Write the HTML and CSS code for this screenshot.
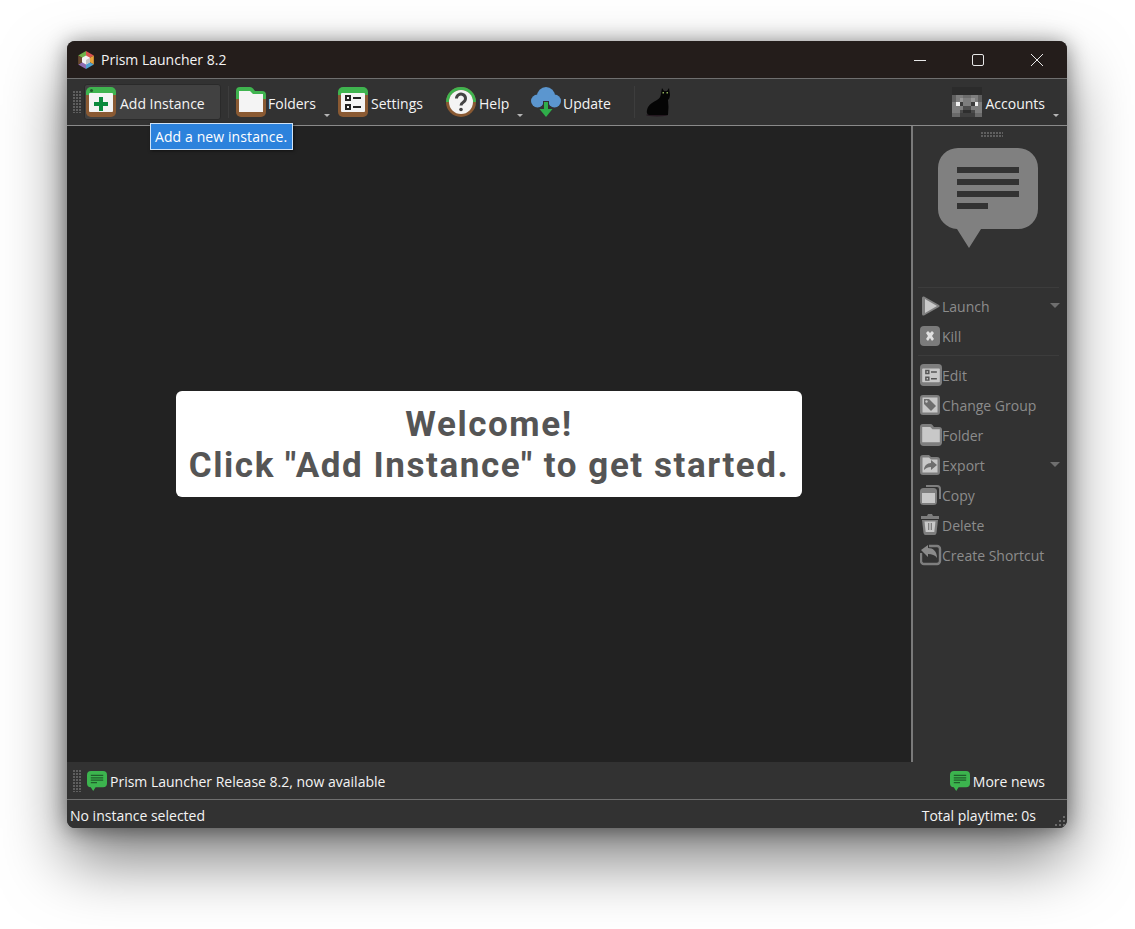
FILE: index.html
```html
<!DOCTYPE html>
<html lang="en">
<head>
  <meta charset="UTF-8">
  <title>Prism Launcher 8.2</title>
  <link rel="stylesheet" href="styles.css">
</head>
<body>

  <!-- shared icons -->
  <svg class="sprite" xmlns="http://www.w3.org/2000/svg">
    <symbol id="i-add" viewBox="0 0 30 30">
      <path class="i-frame" d="M0 6h30v19a5 5 0 0 1-5 5H5a5 5 0 0 1-5-5z"/>
      <path class="i-top" d="M5 0h20a5 5 0 0 1 5 5v3H0V5a5 5 0 0 1 5-5z"/>
      <rect class="i-paper" x="3" y="6" width="24" height="19" rx="1"/>
      <circle class="i-dot" cx="5.500" cy="3.500" r="1.500"/>
      <path class="i-plus" d="M13 10h4v5h5v4h-5v5h-4v-5H8v-4h5z"/>
    </symbol>
    <symbol id="i-folder" viewBox="0 0 30 30">
      <path class="i-frame" d="M0 8h30v17a5 5 0 0 1-5 5H5a5 5 0 0 1-5-5z"/>
      <path class="i-top" d="M4 0h10q2 0 3 1.500L19 4h7a4 4 0 0 1 4 4v4H0V4a4 4 0 0 1 4-4z"/>
      <path class="i-paper" d="M3 4h11l3 3h10v18H3z"/>
    </symbol>
    <symbol id="i-settings" viewBox="0 0 30 30">
      <path class="i-frame" d="M0 6h30v19a5 5 0 0 1-5 5H5a5 5 0 0 1-5-5z"/>
      <path class="i-top" d="M5 0h20a5 5 0 0 1 5 5v3H0V5a5 5 0 0 1 5-5z"/>
      <rect class="i-paper" x="3" y="6" width="24" height="19" rx="1"/>
      <path class="i-ink" d="M7 8h6v6H7zm2 2v2h2v-2zM7 17h6v6H7zm2 2v2h2v-2zM15 10h8v2h-8zM15 19h8v2h-8z" fill-rule="evenodd"/>
    </symbol>
    <symbol id="i-news" viewBox="0 0 100 100">
      <path class="i-bubble" d="M20 0h60a20 20 0 0 1 20 20v41a20 20 0 0 1-20 20H43L31 100 19 81a20 20 0 0 1-19-20V20A20 20 0 0 1 20 0z"/>
      <path class="i-lines" d="M19 19h62v6H19zM19 31h62v6H19zM19 43h62v6H19zM19 55h31v6H19z"/>
    </symbol>
  </svg>

  <div class="window">

    <header class="titlebar">
      <svg class="app-icon" viewBox="0 0 18 18">
        <path fill="#6fb24a" d="M9 0v9L1.200 4.500z"/>
        <path fill="#d9534f" d="M9 0l7.800 4.500L9 9z"/>
        <path fill="#e8a33c" d="M16.800 4.500v9L9 9z"/>
        <path fill="#4fa3d1" d="M16.800 13.500L9 18V9z"/>
        <path fill="#8e6bb0" d="M9 18l-7.800-4.500L9 9z"/>
        <path fill="#6b4a2f" d="M1.200 13.500v-9L9 9z"/>
        <path fill="#f4f4f4" d="M9 4.500l4 2.200v4.600l-4 2.200-4-2.200V6.700z"/>
        <path fill="#c4c4c4" d="M9 9l4-2.300v4.600l-4 2.200z"/>
      </svg>
      <span class="app-title">Prism Launcher 8.2</span>
      <div class="win-controls">
        <button class="win-btn">
          <svg viewBox="0 0 12 12"><path d="M0 6.500h12"/></svg>
        </button>
        <button class="win-btn">
          <svg viewBox="0 0 12 12"><rect x="0.500" y="0.500" width="11" height="11" rx="1.500"/></svg>
        </button>
        <button class="win-btn">
          <svg viewBox="0 0 12 12"><path d="M0 0l12 12M12 0L0 12"/></svg>
        </button>
      </div>
    </header>

    <nav class="toolbar">
      <span class="grip"></span>
      <a class="tool tool-active">
        <svg class="tool-icon"><use href="#i-add"/></svg>
        <span>Add Instance</span>
      </a>
      <span class="tool-sep"></span>
      <a class="tool tool-folders">
        <svg class="tool-icon"><use href="#i-folder"/></svg>
        <span>Folders</span>
        <i class="menu-arrow"></i>
      </a>
      <a class="tool tool-settings">
        <svg class="tool-icon"><use href="#i-settings"/></svg>
        <span>Settings</span>
      </a>
      <a class="tool tool-help">
        <svg class="tool-icon" viewBox="0 0 30 30">
          <circle cx="15" cy="15" r="15" fill="#8a5a33"/>
          <path fill="#3fb44f" d="M0 15a15 15 0 0 1 30 0h-3a12 12 0 0 0-24 0z"/>
          <circle cx="15" cy="15" r="12" fill="#f4f4f4"/>
          <path class="help-mark" d="M10.500 11.500a4.500 4.300 0 1 1 7 3.500c-1.500 1-2.500 1.700-2.500 3.500"/>
          <circle cx="15" cy="22.500" r="1.800" fill="#444"/>
        </svg>
        <span>Help</span>
        <i class="menu-arrow"></i>
      </a>
      <a class="tool tool-update">
        <svg class="tool-icon" viewBox="0 0 30 30">
          <circle cx="6.500" cy="14" r="6.500" fill="#5b96cf"/>
          <circle cx="15" cy="9" r="9" fill="#5b96cf"/>
          <circle cx="23.500" cy="14" r="6.500" fill="#5b96cf"/>
          <path class="update-arrow" d="M13 15h4v7h4.500L15 30l-6.500-8H13z"/>
        </svg>
        <span>Update</span>
      </a>
      <span class="tool-sep tool-sep-cat"></span>
      <svg class="cat" viewBox="0 0 28 30">
        <ellipse cx="13" cy="28" rx="11" ry="1.500" fill="#241820"/>
        <path fill="#050505" d="M18 1l2 3h3l2-3 1 7q0 3-2 5 1 7 0 15H5q-3-1-2-5c1-6 7-8 10-10q4-2 4-7z"/>
        <path fill="#8fae5a" d="M18.500 5h1.500v1.500h-1.500zM22.500 5H24v1.500h-1.500z"/>
      </svg>
      <a class="tool tool-accounts">
        <svg class="avatar" viewBox="0 0 8 8" shape-rendering="crispEdges">
          <rect width="8" height="8" fill="#2b2b2b"/>
          <rect y="2" width="8" height="6" fill="#7d7d7d"/>
          <rect x="0" y="2" width="1" height="2" fill="#5f5f5f"/>
          <rect x="7" y="2" width="1" height="2" fill="#5f5f5f"/>
          <rect x="3" y="2" width="2" height="1" fill="#6c6c6c"/>
          <rect x="2" y="3" width="1" height="1" fill="#969696"/>
          <rect x="5" y="3" width="1" height="1" fill="#969696"/>
          <rect x="1" y="4" width="1" height="1" fill="#f2f2f2"/>
          <rect x="2" y="4" width="1" height="1" fill="#3c3c3c"/>
          <rect x="5" y="4" width="1" height="1" fill="#3c3c3c"/>
          <rect x="6" y="4" width="1" height="1" fill="#f2f2f2"/>
          <rect x="3" y="5" width="2" height="1" fill="#4d4d4d"/>
          <rect x="2" y="6" width="4" height="1" fill="#4a4a4a"/>
          <rect x="3" y="6" width="2" height="1" fill="#2e2e2e"/>
          <rect x="0" y="7" width="2" height="1" fill="#6a6a6a"/>
          <rect x="2" y="7" width="4" height="1" fill="#3f3f3f"/>
          <rect x="6" y="7" width="2" height="1" fill="#6a6a6a"/>
        </svg>
        <span>Accounts</span>
        <i class="menu-arrow"></i>
      </a>
      <div class="tooltip">Add a new instance.</div>
    </nav>

    <div class="content">
      <main class="instances">
        <div class="welcome">Welcome!<br>Click "Add Instance" to get started.</div>
      </main>

      <aside class="sidebar">
        <span class="grip-h"></span>
        <svg class="news-big"><use href="#i-news"/></svg>
        <div class="side-sep side-sep-top"></div>

        <a class="side-item">
          <svg class="side-icon" viewBox="0 0 22 22">
            <path fill="#808080" d="M4 1.500l15 8.500q1.500 1 0 2L4 20.500q-2 .5-2-1.500V3q0-2 2-1.500z"/>
            <path fill="#c9c9c9" d="M5 4l12 7-12 7z"/>
          </svg>
          <span>Launch</span>
          <i class="side-arrow"></i>
        </a>
        <a class="side-item">
          <svg class="side-icon" viewBox="0 0 22 22">
            <rect y="1" width="20" height="20" rx="4" fill="#7b7b7b"/>
            <path fill="#e0e0e0" d="M6 8l2-2 2 2 2-2 2 2-2 2.900 2 3-2 2-2-2.900-2 2.900-2-2 2-3z"/>
          </svg>
          <span>Kill</span>
        </a>
        <div class="side-sep"></div>

        <a class="side-item">
          <svg class="side-icon side-icon-box"><use href="#i-settings"/></svg>
          <span>Edit</span>
        </a>
        <a class="side-item">
          <svg class="side-icon" viewBox="0 0 22 22">
            <rect y="1" width="20" height="20" rx="3" fill="#7e7e7e"/>
            <rect x="2.500" y="3.500" width="15" height="15" fill="#c8c8c8"/>
            <path fill="#6e6e6e" d="M4 5h5l7 7-5 5-7-7z"/>
            <circle cx="6.500" cy="7.500" r="1.200" fill="#c8c8c8"/>
          </svg>
          <span>Change Group</span>
        </a>
        <a class="side-item">
          <svg class="side-icon side-icon-box"><use href="#i-folder"/></svg>
          <span>Folder</span>
        </a>
        <a class="side-item">
          <svg class="side-icon" viewBox="0 0 22 22">
            <path fill="#7e7e7e" d="M3 1h6l2 2h6a3 3 0 0 1 3 3v12a3 3 0 0 1-3 3H3a3 3 0 0 1-3-3V4a3 3 0 0 1 3-3z"/>
            <path fill="#c8c8c8" d="M2.500 3.500H9l2 2h6.500v13h-15z"/>
            <path fill="#6e6e6e" d="M4 16c0-4 3-7 7-7V6l6 5-6 5v-3c-3 0-5 1-7 3z"/>
          </svg>
          <span>Export</span>
          <i class="side-arrow"></i>
        </a>
        <a class="side-item">
          <svg class="side-icon" viewBox="0 0 22 22">
            <path fill="none" stroke="#7e7e7e" stroke-width="2" d="M6 2h11a3 3 0 0 1 3 3v10"/>
            <rect y="4" width="17" height="17" rx="3.500" fill="#7e7e7e"/>
            <rect x="2" y="9" width="13" height="10" fill="#c8c8c8"/>
          </svg>
          <span>Copy</span>
        </a>
        <a class="side-item">
          <svg class="side-icon" viewBox="0 0 22 22">
            <path fill="#7e7e7e" d="M8 0h4l1 2h6v3H1V2h6z"/>
            <path fill="#7e7e7e" d="M2 6h16l-1.500 13q-.3 2-2 2h-9q-1.700 0-2-2z"/>
            <path fill="#c8c8c8" d="M4.500 7.500h11L14.300 18H5.700z"/>
            <path fill="#7e7e7e" d="M8 9h1.300v7H8zM10.700 9H12v7h-1.300z"/>
          </svg>
          <span>Delete</span>
        </a>
        <a class="side-item">
          <svg class="side-icon" viewBox="0 0 22 22">
            <path fill="none" stroke="#7e7e7e" stroke-width="2.400" d="M9 2h8a3 3 0 0 1 3 3v12a3 3 0 0 1-3 3H4a3 3 0 0 1-3-3V9"/>
            <path fill="#8a8a8a" d="M1 6l7-5v3c5 0 9 3 9 10-2-3-5-4-9-4v3z"/>
          </svg>
          <span>Create Shortcut</span>
        </a>
      </aside>
    </div>

    <div class="newsbar">
      <span class="grip"></span>
      <svg class="news-small"><use href="#i-news"/></svg>
      <span class="news-title">Prism Launcher Release 8.2, now available</span>
      <svg class="news-small news-more-icon"><use href="#i-news"/></svg>
      <span class="news-more">More news</span>
    </div>

    <footer class="statusbar">
      <span>No instance selected</span>
      <span class="playtime">Total playtime: 0s</span>
      <span class="size-grip"></span>
    </footer>
  </div>

</body>
</html>
```

FILE: styles.css
```css
* {
  box-sizing: border-box;
}

body {
  margin: 0;
  height: 929px;
  overflow: hidden;
  background: #fff;
  padding: 41px 0 0 67px;
  font-family: "Open Sans", "Noto Sans", sans-serif;
  font-size: 14px;
  color: #f4f4f4;
}

.sprite {
  display: none;
}

.i-frame { fill: var(--frame, #8a5a33); }
.i-top { fill: var(--top, #3fb44f); }
.i-paper { fill: var(--paper, #f4f4f4); }
.i-dot { fill: var(--dot, #1f5a2a); }
.i-plus { fill: #0b8a3c; }
.i-ink { fill: var(--ink, #222); }
.i-bubble { fill: var(--bubble, #808080); }
.i-lines { fill: var(--lines, #333); }

.window {
  width: 1000px;
  height: 787px;
  border-radius: 8px;
  overflow: hidden;
  display: flex;
  flex-direction: column;
  background: #323232;
  box-shadow: 0 32px 64px rgba(0, 0, 0, 0.5), 0 2px 21px rgba(0, 0, 0, 0.45);
  position: relative;
}

/* title bar */
.titlebar {
  height: 38px;
  flex: none;
  display: flex;
  align-items: center;
  background: #241d1b;
  border-bottom: 1px solid #6f6f6f;
  padding-left: 10px;
}

.app-icon {
  width: 18px;
  height: 18px;
  margin-right: 6px;
}

.app-title {
  font-size: 14px;
}

.win-controls {
  margin-left: auto;
  display: flex;
  padding-right: 1px;
}

.win-btn {
  width: 59px;
  height: 37px;
  padding: 0;
  border: none;
  background: none;
  display: flex;
  align-items: center;
  justify-content: center;
}

.win-btn:first-child {
  padding-left: 2px;
}

.win-btn svg {
  width: 12px;
  height: 12px;
  fill: none;
  stroke: #e8e8e8;
  stroke-width: 1;
}

/* toolbar */
.toolbar {
  height: 47px;
  flex: none;
  display: flex;
  align-items: center;
  padding-left: 6px;
  background: #323232;
  border-bottom: 1px solid #8a8a8a;
  position: relative;
}

.grip {
  width: 8px;
  height: 22px;
  flex: none;
  background: repeating-linear-gradient(90deg, #5f5f5f 0 2px, transparent 2px 3px);
  -webkit-mask-image: repeating-linear-gradient(#000 0 2px, transparent 2px 3px);
  mask-image: repeating-linear-gradient(#000 0 2px, transparent 2px 3px);
}

.tool {
  display: flex;
  align-items: center;
  height: 36px;
  position: relative;
  white-space: nowrap;
}

.tool span {
  padding-top: 3px;
}

.tool-icon {
  width: 30px;
  height: 30px;
  margin-right: 3px;
  flex: none;
}

.tool-active {
  width: 137px;
  margin-left: 3px;
  padding-left: 3px;
  background: #414141;
  border: 1px solid #2a2a2a;
  border-radius: 3px;
}

.tool-active .tool-icon {
  margin-left: -2px;
  margin-right: 4px;
}

.tool-sep {
  width: 1px;
  height: 32px;
  margin: 0 7px 0 7px;
  background: #3d3d3d;
}

.tool-folders {
  width: 102px;
}

.tool-folders .tool-icon,
.tool-update .tool-icon {
  margin-right: 2px;
}

.tool-settings {
  width: 108px;
}

.tool-help {
  width: 85px;
}

.tool-update {
  width: 100px;
}

.tool-sep-cat {
  margin: 0 9px 0 3px;
}

.cat {
  width: 28px;
  height: 30px;
  flex: none;
}

.tool-accounts {
  margin-left: auto;
  padding-right: 22px;
}

.avatar {
  width: 30px;
  height: 30px;
  margin-right: 3px;
}

.menu-arrow {
  position: absolute;
  right: 8px;
  bottom: 3px;
  border-style: solid;
  border-width: 3px 3.5px 0;
  border-color: #b5b5b5 transparent transparent;
}

.help-mark {
  fill: none;
  stroke: #444;
  stroke-width: 3;
}

.update-arrow {
  fill: #2fae4a;
  stroke: #323232;
  stroke-width: 2;
  paint-order: stroke;
}

.tooltip {
  position: absolute;
  left: 83px;
  top: 44px;
  width: 143px;
  height: 27px;
  padding: 0 4px;
  line-height: 25px;
  letter-spacing: 0.1px;
  white-space: nowrap;
  background: #2c82dc;
  color: #fff;
  border: 1px solid #cfe3f7;
  box-shadow: 1px 1px 3px rgba(0, 0, 0, 0.5);
  z-index: 2;
}

/* main area */
.content {
  flex: 1;
  display: flex;
  min-height: 0;
}

.instances {
  flex: 1;
  display: flex;
  align-items: center;
  justify-content: center;
  background: #222;
}

.welcome {
  width: 626px;
  height: 106px;
  background: #fff;
  border-radius: 6px;
  text-align: center;
  color: #555;
  font-family: Roboto, sans-serif;
  font-weight: 700;
  font-size: 35px;
  letter-spacing: 1.55px;
  line-height: 41px;
  padding-top: 13px;
  white-space: nowrap;
}

.sidebar {
  width: 156px;
  flex: none;
  display: flex;
  flex-direction: column;
  background: #323232;
  border-left: 2px solid #7a7a7a;
  color: #8c8c8c;
  position: relative;
}

.grip-h {
  width: 22px;
  height: 6px;
  margin: 6px 0 0 68px;
  background: repeating-linear-gradient(90deg, #5f5f5f 0 2px, transparent 2px 3px);
  -webkit-mask-image: repeating-linear-gradient(#000 0 2px, transparent 2px 3px);
  mask-image: repeating-linear-gradient(#000 0 2px, transparent 2px 3px);
}

.news-big {
  width: 100px;
  height: 100px;
  margin: 10px 0 0 25px;
  flex: none;
}

.side-sep {
  height: 1px;
  margin: 4px 8px 4px 5px;
  background: #3c3c3c;
}

.side-sep-top {
  margin-top: 39px;
  margin-bottom: 3px;
}

.side-item {
  height: 30px;
  display: flex;
  align-items: center;
  padding-left: 7px;
  position: relative;
  white-space: nowrap;
}

.side-item span {
  padding-top: 1px;
}

.side-icon {
  width: 22px;
  height: 22px;
  flex: none;
  --frame: #7e7e7e;
  --top: #7e7e7e;
  --paper: #c8c8c8;
  --dot: #555;
  --ink: #555;
}

.side-arrow {
  position: absolute;
  right: 7px;
  top: 12px;
  border-style: solid;
  border-width: 5px 5px 0;
  border-color: #6f6f6f transparent transparent;
}

/* news bar */
.newsbar {
  height: 38px;
  flex: none;
  display: flex;
  align-items: center;
  padding: 0 22px 0 6px;
  background: #323232;
  border-bottom: 1px solid #6f6f6f;
}

.news-small {
  width: 20px;
  height: 20px;
  margin: 0 3px 0 6px;
  flex: none;
  --bubble: #3cb44e;
  --lines: #1f5f2b;
}

.news-title {
  flex: 1;
  padding-top: 2px;
}

.news-more {
  padding-top: 2px;
}

.news-more-icon {
  margin-left: 0;
  margin-right: 3px;
}

/* status bar */
.statusbar {
  height: 28px;
  flex: none;
  display: flex;
  align-items: center;
  padding: 2px 31px 0 3px;
  background: #323232;
  position: relative;
}

.playtime {
  margin-left: auto;
}

.size-grip {
  position: absolute;
  right: 0;
  bottom: 0;
  width: 16px;
  height: 16px;
  background: repeating-linear-gradient(90deg, #6a6a6a 0 2px, transparent 2px 4px);
  -webkit-mask-image: repeating-linear-gradient(#000 0 2px, transparent 2px 4px);
  mask-image: repeating-linear-gradient(#000 0 2px, transparent 2px 4px);
  clip-path: polygon(100% 0, 100% 100%, 0 100%);
}
```
